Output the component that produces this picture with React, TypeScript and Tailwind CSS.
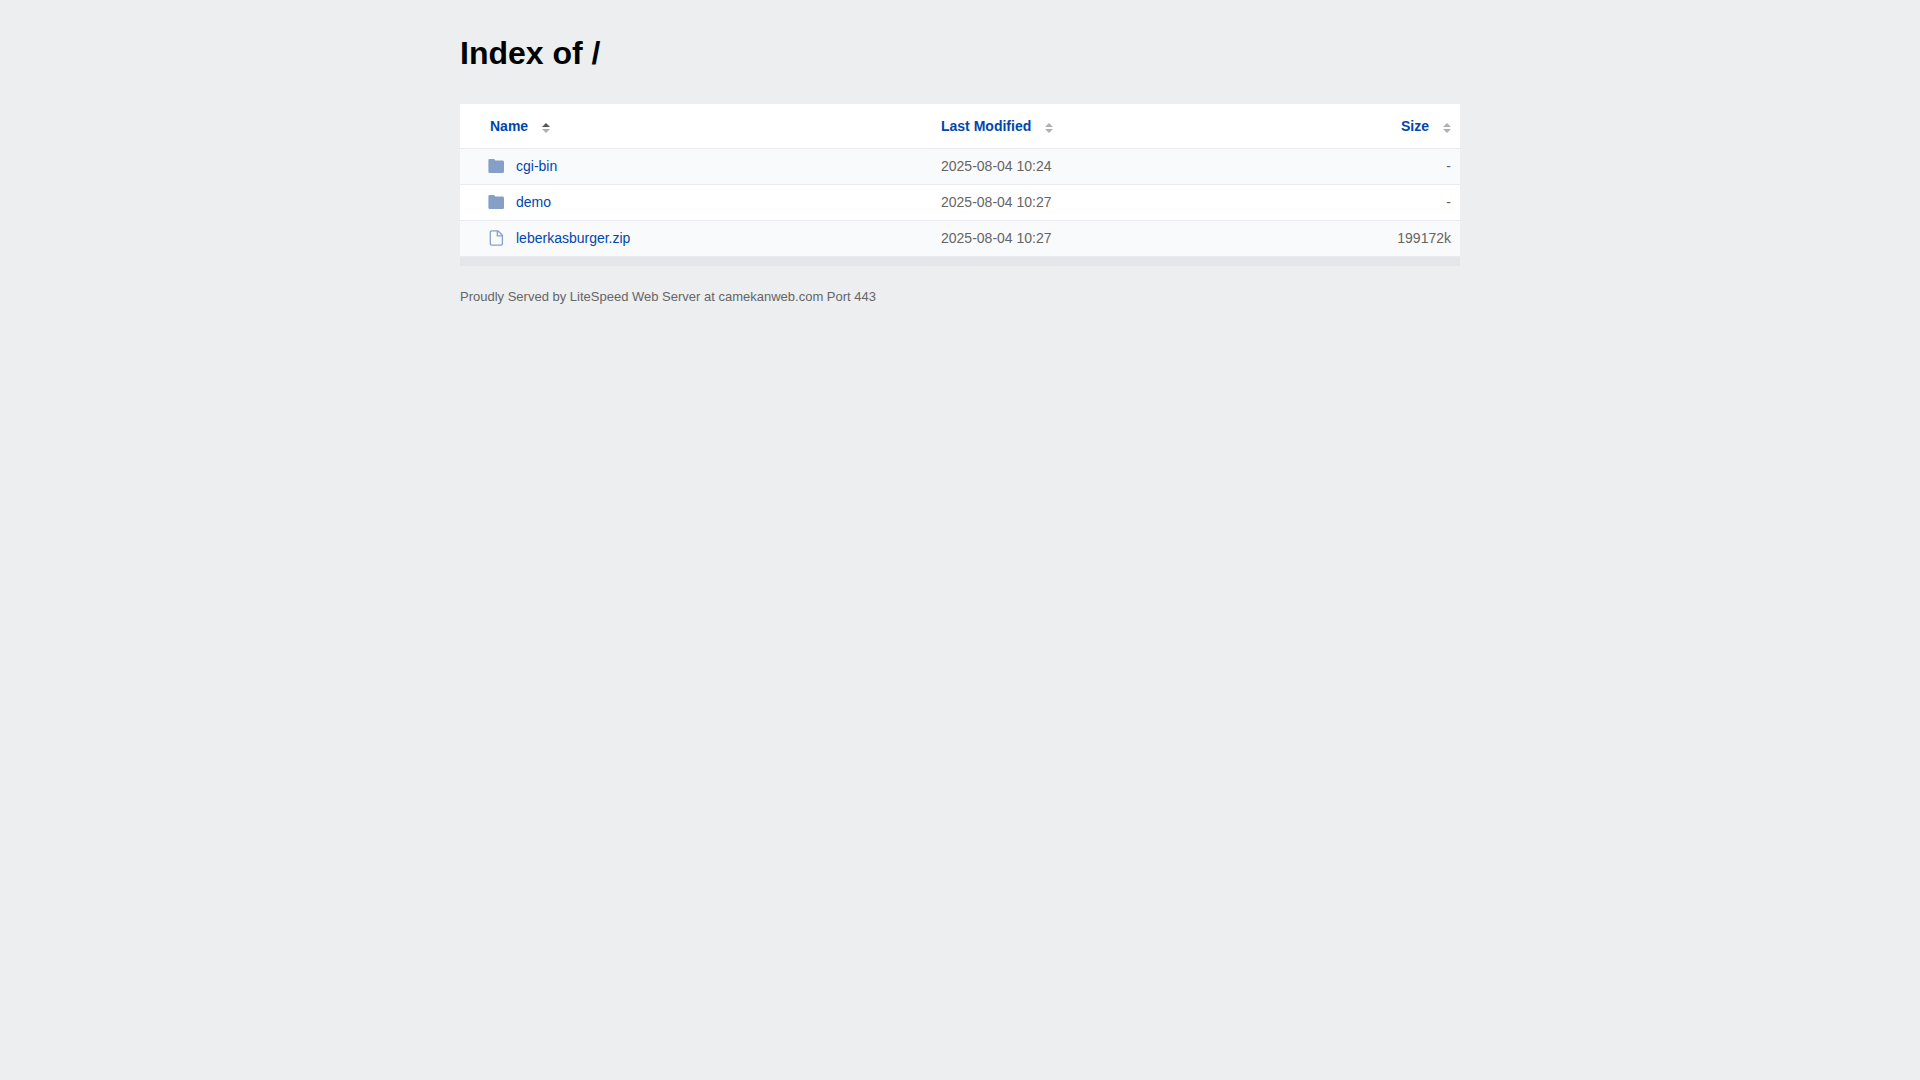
import React from 'react';

interface Entry {
  name: string;
  modified: string;
  size: string;
  type: 'folder' | 'file';
}

const entries: Entry[] = [
  { name: 'cgi-bin', modified: '2025-08-04 10:24', size: '-', type: 'folder' },
  { name: 'demo', modified: '2025-08-04 10:27', size: '-', type: 'folder' },
  { name: 'leberkasburger.zip', modified: '2025-08-04 10:27', size: '199172k', type: 'file' },
];

const FolderIcon: React.FC = () => (
  <svg className="w-4 h-4 shrink-0" viewBox="0 0 16 16" fill="#85a0c7" aria-hidden="true">
    <path d="M.4 2.300C.4 1.500 1 1 1.700 1h3.900c.6 0 1 .2 1.200.7l.5.9h7.100c1 0 1.600.7 1.600 1.600v9.200c0 1-.7 1.600-1.600 1.600H2c-1 0-1.600-.7-1.600-1.600z" />
  </svg>
);

const FileIcon: React.FC = () => (
  <svg className="w-4 h-4 shrink-0" viewBox="0 0 16 16" fill="none" stroke="#85a0c7" strokeWidth="1.300" strokeLinejoin="round" aria-hidden="true">
    <path d="M3.700.8h6.200l4.500 4.500v8.500c0 .8-.6 1.400-1.400 1.400H3.700c-.8 0-1.400-.6-1.400-1.400V2.200c0-.8.6-1.400 1.400-1.400z" />
    <path d="M9.300 1v4.900h4.900" />
  </svg>
);

const SortIcon: React.FC<{ ascending?: boolean }> = ({ ascending }) => (
  <svg className="w-2 h-[10px] mt-1" viewBox="0 0 8 10" aria-hidden="true">
    <path d="M4 0l4 4H0z" fill={ascending ? '#555' : '#b0b0b0'} />
    <path d="M0 6h8l-4 4z" fill="#b0b0b0" />
  </svg>
);

const SortButton: React.FC<{ label: string; ascending?: boolean }> = ({ label, ascending }) => (
  <button type="button" className="inline-flex items-center gap-[14px] align-top font-bold text-[#0046af] cursor-pointer">
    {label}
    <SortIcon ascending={ascending} />
  </button>
);

const App: React.FC = () => (
  <div className="min-h-screen bg-[#edeef0] px-4 py-8 font-['Liberation_Sans',Arial,sans-serif] text-sm text-[#656565]">
    <main className="max-w-[1000px] mx-auto">
      <h1 className="text-[32px] leading-[42px] font-bold text-black mb-[30px]">Index of /</h1>

      <table className="w-full table-fixed border-collapse bg-white">
        <thead>
          <tr className="h-11 border-b border-[#e9eaed]">
            <th className="w-[472px] pl-[30px] pr-2 text-left" aria-sort="ascending">
              <SortButton label="Name" ascending />
            </th>
            <th className="px-[9px] text-left">
              <SortButton label="Last Modified" />
            </th>
            <th className="px-[9px] text-right">
              <SortButton label="Size" />
            </th>
          </tr>
        </thead>
        <tbody>
          {entries.map((entry) => (
            <tr key={entry.name} className="h-9 border-b border-[#e9eaed] odd:bg-[#f9fafc]">
              <td className="pl-7 pr-2">
                <a href={entry.name} className="flex items-center gap-3 text-[#0046af] hover:underline">
                  {entry.type === 'folder' ? <FolderIcon /> : <FileIcon />}
                  {entry.name}
                </a>
              </td>
              <td className="px-[9px]">{entry.modified}</td>
              <td className="px-[9px] text-right">{entry.size}</td>
            </tr>
          ))}
        </tbody>
        <tfoot>
          <tr className="h-[10px] bg-[#e4e7ea]">
            <td colSpan={3} />
          </tr>
        </tfoot>
      </table>

      <p className="mt-5 text-[13px] leading-[22px]">
        Proudly Served by LiteSpeed Web Server at camekanweb.com Port 443
      </p>
    </main>
  </div>
);

export default App;
